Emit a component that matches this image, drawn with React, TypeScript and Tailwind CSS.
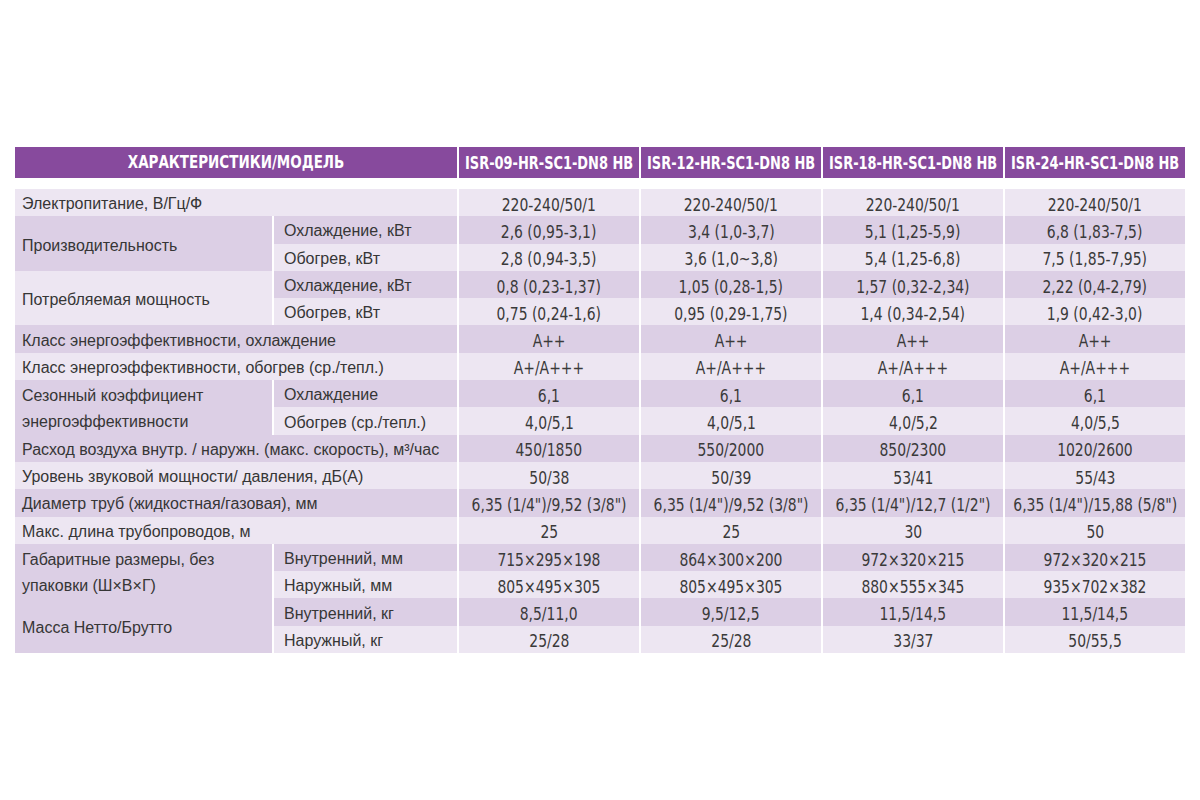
const DARK = "bg-[#dccfe5]";
const LIGHT = "bg-[#ede6f2]";

const MODELS = [
  "ISR-09-HR-SC1-DN8 HB",
  "ISR-12-HR-SC1-DN8 HB",
  "ISR-18-HR-SC1-DN8 HB",
  "ISR-24-HR-SC1-DN8 HB",
];

type Row = {
  group?: { text: string[]; dark: boolean };
  label?: string;
  sub?: string;
  values: string[];
};

const ROWS: Row[] = [
  { label: "Электропитание, В/Гц/Ф", values: ["220-240/50/1", "220-240/50/1", "220-240/50/1", "220-240/50/1"] },
  { group: { text: ["Производительность"], dark: true }, sub: "Охлаждение, кВт", values: ["2,6 (0,95-3,1)", "3,4 (1,0-3,7)", "5,1 (1,25-5,9)", "6,8 (1,83-7,5)"] },
  { sub: "Обогрев, кВт", values: ["2,8 (0,94-3,5)", "3,6 (1,0~3,8)", "5,4 (1,25-6,8)", "7,5 (1,85-7,95)"] },
  { group: { text: ["Потребляемая мощность"], dark: false }, sub: "Охлаждение, кВт", values: ["0,8 (0,23-1,37)", "1,05 (0,28-1,5)", "1,57 (0,32-2,34)", "2,22 (0,4-2,79)"] },
  { sub: "Обогрев, кВт", values: ["0,75 (0,24-1,6)", "0,95 (0,29-1,75)", "1,4 (0,34-2,54)", "1,9 (0,42-3,0)"] },
  { label: "Класс энергоэффективности, охлаждение", values: ["A++", "A++", "A++", "A++"] },
  { label: "Класс энергоэффективности, обогрев (ср./тепл.)", values: ["A+/A+++", "A+/A+++", "A+/A+++", "A+/A+++"] },
  { group: { text: ["Сезонный коэффициент", "энергоэффективности"], dark: true }, sub: "Охлаждение", values: ["6,1", "6,1", "6,1", "6,1"] },
  { sub: "Обогрев (ср./тепл.)", values: ["4,0/5,1", "4,0/5,1", "4,0/5,2", "4,0/5,5"] },
  { label: "Расход воздуха внутр. / наружн. (макс. скорость), м³/час", values: ["450/1850", "550/2000", "850/2300", "1020/2600"] },
  { label: "Уровень звуковой мощности/ давления, дБ(А)", values: ["50/38", "50/39", "53/41", "55/43"] },
  { label: "Диаметр труб (жидкостная/газовая), мм", values: ["6,35 (1/4\")/9,52 (3/8\")", "6,35 (1/4\")/9,52 (3/8\")", "6,35 (1/4\")/12,7 (1/2\")", "6,35 (1/4\")/15,88 (5/8\")"] },
  { label: "Макс. длина трубопроводов, м", values: ["25", "25", "30", "50"] },
  { group: { text: ["Габаритные размеры, без", "упаковки (Ш×В×Г)"], dark: true }, sub: "Внутренний, мм", values: ["715×295×198", "864×300×200", "972×320×215", "972×320×215"] },
  { sub: "Наружный, мм", values: ["805×495×305", "805×495×305", "880×555×345", "935×702×382"] },
  { group: { text: ["Масса Нетто/Брутто"], dark: true }, sub: "Внутренний, кг", values: ["8,5/11,0", "9,5/12,5", "11,5/14,5", "11,5/14,5"] },
  { sub: "Наружный, кг", values: ["25/28", "25/28", "33/37", "50/55,5"] },
];

const labelFont = "font-['Liberation_Sans',sans-serif] text-[16px] text-[#363636]";
const narrowFont = "font-['DejaVu_Sans_Condensed','DejaVu_Sans',sans-serif] [font-stretch:condensed]";
const cols = "grid grid-cols-[257px_183px_repeat(4,minmax(0,1fr))] gap-x-[2px]";

export default function App() {
  return (
    <div className="min-h-[800px] w-[1200px] bg-white px-[15px] pt-[147px]">
      <div className={`${cols} h-[31px]`}>
        <div className={`col-span-2 bg-[#874a9d] flex items-center justify-center text-white font-bold text-[17px] ${narrowFont}`}>
          <span className="inline-block scale-x-[0.88]">ХАРАКТЕРИСТИКИ/МОДЕЛЬ</span>
        </div>
        {MODELS.map((m) => (
          <div key={m} className={`bg-[#874a9d] flex items-center justify-center text-white font-bold text-[18px] whitespace-nowrap ${narrowFont}`}>
            <span className="inline-block scale-x-[0.8]">{m}</span>
          </div>
        ))}
      </div>

      <div className={`mt-[11px] ${cols} grid-rows-[repeat(17,27.3px)]`}>
        {ROWS.map((row, i) => {
          const bg = i % 2 === 0 ? LIGHT : DARK;
          return [
            row.label && (
              <div key={`l${i}`} className={`col-span-2 ${bg} flex items-center pl-[7px] pt-[3px] whitespace-nowrap ${labelFont}`}>
                {row.label}
              </div>
            ),
            row.group && (
              <div key={`g${i}`} className={`row-span-2 ${row.group.dark ? DARK : LIGHT} flex flex-col justify-center pl-[7px] pt-[4px] leading-[26px] ${labelFont}`}>
                {row.group.text.map((t) => <span key={t}>{t}</span>)}
              </div>
            ),
            row.sub && (
              <div key={`s${i}`} className={`${bg} flex items-center pl-[10px] pt-[3px] whitespace-nowrap ${labelFont}`}>
                {row.sub}
              </div>
            ),
            ...row.values.map((v, j) => (
              <div key={`v${i}-${j}`} className={`${bg} flex items-center justify-center pt-[3px] whitespace-nowrap text-[18px] text-[#3a3a3a] ${narrowFont}`}>
                <span className="inline-block scale-x-[0.86]">{v}</span>
              </div>
            )),
          ];
        })}
      </div>
    </div>
  );
}
